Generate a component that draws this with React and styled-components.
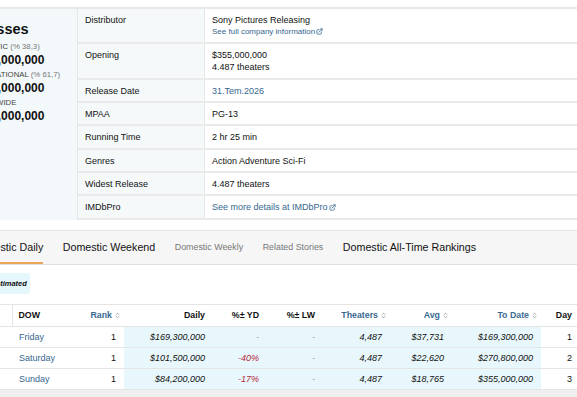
import React from 'react';
import styled, { createGlobalStyle } from 'styled-components';
import { ExternalLink, ChevronsUpDown } from 'lucide-react';

const GlobalStyle = createGlobalStyle`
  html, body {
    margin: 0;
    padding: 0;
    background: #fff;
    overflow: hidden;
  }
  body {
    font-family: "Liberation Sans", Arial, sans-serif;
    color: #111;
  }
`;

const Page = styled.div`
  width: 720px;
  margin-left: -100px;
  padding-top: 7px;
`;

const TopSection = styled.section`
  display: flex;
  border-top: 2px solid #e8e8e8;
`;

const Summary = styled.div`
  width: 106px;
  padding: 10px 0 0 71px;
  background: #f3f8fa;
  border-right: 1px solid #e3e7e9;
`;

const SummaryTitle = styled.h2`
  margin: 0 0 2px -23px;
  font-size: 14.5px;
  line-height: 20px;
  font-weight: 700;
  white-space: nowrap;
`;

const GrossLabel = styled.div`
  margin-left: -4px;
  font-size: 7.8px;
  line-height: 11px;
  color: #444;
  text-transform: uppercase;
  white-space: nowrap;

  span {
    text-transform: none;
    color: #777;
  }
`;

const GrossValue = styled.div`
  font-size: 12px;
  line-height: 17px;
  font-weight: 700;
`;

const Details = styled.table`
  flex: 1;
  border-collapse: collapse;
  table-layout: fixed;
`;

const Label = styled.td`
  width: 111px;
  padding: 5px 8px 4.33px 7px;
  background: #f5f9fa;
  border-bottom: 2px solid #eaeaea;
  border-right: 1px solid #e3e7e9;
  font-size: 9px;
  line-height: 12px;
  vertical-align: top;
`;

const Value = styled.td`
  padding: 5px 8px 4.33px 7px;
  border-bottom: 2px solid #eaeaea;
  font-size: 9px;
  line-height: 12px;
  vertical-align: top;
`;

const Link = styled.a`
  color: #36678f;
  text-decoration: none;
  font-size: ${(p) => (p.$small ? '8px' : '9px')};
  line-height: ${(p) => (p.$small ? '12px' : '12px')};
  display: ${(p) => (p.$small ? 'block' : 'inline')};

  svg {
    margin-left: 1px;
    vertical-align: -1px;
  }
`;

const TabBar = styled.nav`
  display: flex;
  gap: 19.5px;
  height: 33px;
  margin-top: 10px;
  padding-left: 72px;
  background: #f6f6f6;
  border-top: 1px solid #e4e4e4;
  border-bottom: 1px solid #e0e0e0;
`;

const Tab = styled.div`
  display: flex;
  align-items: center;
  font-size: ${(p) => (p.$minor ? '8.9px' : '10.7px')};
  color: ${(p) => (p.$minor ? '#777' : '#111')};
  white-space: nowrap;
  box-shadow: ${(p) => (p.$active ? 'inset 0 -2px 0 #eba65a' : 'none')};
`;

const Badge = styled.div`
  display: inline-flex;
  align-items: center;
  height: 21px;
  margin: 8px 0 0 88px;
  padding: 0 3px;
  background: #e4f7fb;
  border-radius: 2px;
  font-size: 7.5px;
  font-weight: 700;
  font-style: italic;
`;

const DailyTable = styled.table`
  width: 720px;
  margin-top: 10px;
  border-collapse: collapse;
  table-layout: fixed;
  border-top: 1px solid #e4e4e4;
`;

const Th = styled.th`
  height: 21px;
  padding: 0 ${(p) => (p.$sortable ? '3px' : '8px')} 0 ${(p) => (p.$first ? '6px' : '8px')};
  text-align: ${(p) => p.$align};
  font-size: 8.8px;
  font-weight: 700;
  color: ${(p) => (p.$sortable ? '#3a6a92' : '#111')};
  border-bottom: 1px solid #e4e4e4;
  border-left: ${(p) => (p.$first ? '1px solid #e4e4e4' : 'none')};
  white-space: nowrap;

  svg {
    margin-left: 2px;
    vertical-align: -1px;
    color: #888;
  }
`;

const Td = styled.td`
  height: 20px;
  padding: 0 8px 0 ${(p) => (p.$first ? '7px' : '8px')};
  text-align: ${(p) => p.$align};
  font-size: 9px;
  font-style: ${(p) => (p.$italic ? 'italic' : 'normal')};
  color: ${(p) => p.$color || '#111'};
  background: ${(p) => (p.$highlight ? '#e8f7fc' : 'transparent')};
  border-bottom: 1px solid #e4e4e4;
  white-space: nowrap;
`;

const Footer = styled.div`
  height: 60px;
  width: 720px;
  background: #efefef;
`;

const grosses = [
  { label: 'Domestic', share: '(% 38,3)', value: '$355,000,000' },
  { label: 'International', share: '(% 61,7)', value: '$572,000,000' },
  { label: 'Worldwide', share: '', value: '$927,000,000' },
];

const columns = [
  { key: 'date', label: '', width: 112, align: 'left' },
  { key: 'dow', label: 'DOW', width: 58, align: 'left' },
  { key: 'rank', label: 'Rank', width: 54, align: 'right', sortable: true },
  { key: 'daily', label: 'Daily', width: 89, align: 'right', italic: true, highlight: true },
  { key: 'yd', label: '%± YD', width: 54, align: 'right', italic: true, highlight: true },
  { key: 'lw', label: '%± LW', width: 56, align: 'right', italic: true, highlight: true },
  { key: 'theaters', label: 'Theaters', width: 67, align: 'right', italic: true, highlight: true, sortable: true },
  { key: 'avg', label: 'Avg', width: 62, align: 'right', italic: true, highlight: true, sortable: true },
  { key: 'toDate', label: 'To Date', width: 89, align: 'right', italic: true, highlight: true, sortable: true },
  { key: 'day', label: 'Day', width: 39, align: 'right' },
  { key: 'est', label: '', width: 40, align: 'left' },
];

const rows = [
  { date: '', dow: 'Friday', rank: '1', daily: '$169,300,000', yd: '-', lw: '-', theaters: '4,487', avg: '$37,731', toDate: '$169,300,000', day: '1', est: '' },
  { date: '', dow: 'Saturday', rank: '1', daily: '$101,500,000', yd: '-40%', lw: '-', theaters: '4,487', avg: '$22,620', toDate: '$270,800,000', day: '2', est: '' },
  { date: '', dow: 'Sunday', rank: '1', daily: '$84,200,000', yd: '-17%', lw: '-', theaters: '4,487', avg: '$18,765', toDate: '$355,000,000', day: '3', est: '' },
];

function cellColor(key, value) {
  if (key === 'dow') return '#36678f';
  if (value === '-') return '#888';
  if (value.startsWith('-')) return '#b3293a';
  return null;
}

export default function App() {
  return (
    <>
      <GlobalStyle />
      <Page>
        <TopSection>
          <Summary>
            <SummaryTitle>All Grosses</SummaryTitle>
            {grosses.map((g) => (
              <div key={g.label}>
                <GrossLabel>
                  {g.label} {g.share && <span>{g.share}</span>}
                </GrossLabel>
                <GrossValue>{g.value}</GrossValue>
              </div>
            ))}
          </Summary>
          <Details>
            <tbody>
              <tr>
                <Label>Distributor</Label>
                <Value>
                  Sony Pictures Releasing
                  <Link $small href='#'>
                    See full company information
                    <ExternalLink size={7} strokeWidth={2.6} />
                  </Link>
                </Value>
              </tr>
              <tr>
                <Label>Opening</Label>
                <Value>
                  $355,000,000
                  <br />
                  4.487 theaters
                </Value>
              </tr>
              <tr>
                <Label>Release Date</Label>
                <Value>
                  <Link href='#'>31.Tem.2026</Link>
                </Value>
              </tr>
              <tr>
                <Label>MPAA</Label>
                <Value>PG-13</Value>
              </tr>
              <tr>
                <Label>Running Time</Label>
                <Value>2 hr 25 min</Value>
              </tr>
              <tr>
                <Label>Genres</Label>
                <Value>Action Adventure Sci-Fi</Value>
              </tr>
              <tr>
                <Label>Widest Release</Label>
                <Value>4.487 theaters</Value>
              </tr>
              <tr>
                <Label>IMDbPro</Label>
                <Value>
                  <Link href='#'>
                    See more details at IMDbPro
                    <ExternalLink size={7} strokeWidth={2.6} />
                  </Link>
                </Value>
              </tr>
            </tbody>
          </Details>
        </TopSection>

        <TabBar>
          <Tab $active>Domestic Daily</Tab>
          <Tab>Domestic Weekend</Tab>
          <Tab $minor>Domestic Weekly</Tab>
          <Tab $minor>Related Stories</Tab>
          <Tab>Domestic All-Time Rankings</Tab>
        </TabBar>

        <Badge>Estimated</Badge>

        <DailyTable>
          <colgroup>
            {columns.map((c) => (
              <col key={c.key} style={{ width: c.width }} />
            ))}
          </colgroup>
          <thead>
            <tr>
              {columns.map((c) => (
                <Th key={c.key} $align={c.align} $sortable={c.sortable} $first={c.key === 'dow'}>
                  {c.label}
                  {c.sortable && <ChevronsUpDown size={7} strokeWidth={2.4} />}
                </Th>
              ))}
            </tr>
          </thead>
          <tbody>
            {rows.map((r) => (
              <tr key={r.dow}>
                {columns.map((c) => (
                  <Td
                    key={c.key}
                    $align={c.align}
                    $italic={c.italic}
                    $highlight={c.highlight}
                    $first={c.key === 'dow'}
                    $color={cellColor(c.key, r[c.key])}
                  >
                    {r[c.key]}
                  </Td>
                ))}
              </tr>
            ))}
          </tbody>
        </DailyTable>
        <Footer />
      </Page>
    </>
  );
}
